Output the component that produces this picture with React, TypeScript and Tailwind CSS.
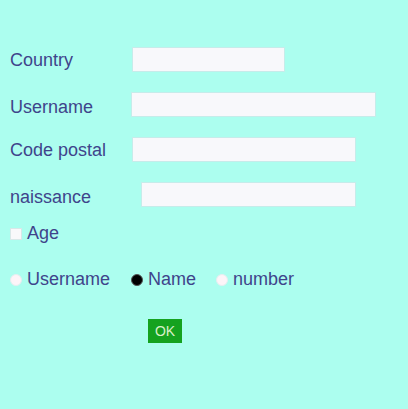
import React, { useState } from 'react';

const fields = [
  { id: 'country', label: 'Country', labelW: 'w-[122px] pt-[2px]', inputW: 'w-[153px]' },
  { id: 'username', label: 'Username', labelW: 'w-[121px] pt-[6px]', inputW: 'w-[245px]' },
  { id: 'postal', label: 'Code postal', labelW: 'w-[122px] pt-[2px]', inputW: 'w-[224px]' },
  { id: 'birth', label: 'naissance', labelW: 'w-[131px] pt-[6px]', inputW: 'w-[215px]' },
];

const choices = [
  { id: 'username', label: 'Username', w: 'w-[121px]' },
  { id: 'name', label: 'Name', w: 'w-[85px]' },
  { id: 'number', label: 'number', w: 'w-auto' },
];

export default function App() {
  const [age, setAge] = useState(false);
  const [choice, setChoice] = useState('name');

  return (
    <div className="w-[408px] h-[409px] bg-[#acfeef] text-[#3f448b] text-[18px] font-['Liberation_Sans',Arial,sans-serif] pl-[10px] pt-[47px]">
      <div className="flex flex-col gap-[20px]">
        {fields.map((f) => (
          <div key={f.id} className="flex items-center h-[25px]">
            <label className={`${f.labelW} leading-[21px]`}>{f.label}</label>
            <input
              className={`${f.inputW} h-[25px] bg-[#f8f8fb] border border-[#c6ecea] outline-none px-1 text-sm`}
            />
          </div>
        ))}
      </div>

      {/* Age checkbox */}
      <div className="flex items-center h-[21px] mt-[16px]" onClick={() => setAge(!age)}>
        <span className="w-[12px] h-[12px] bg-[#f9f8fa] border border-[#d8e8e8] flex items-center justify-center">
          {age && <span className="w-[6px] h-[6px] bg-black" />}
        </span>
        <span className="ml-[5px] leading-[21px]">Age</span>
      </div>

      {/* Radio choices */}
      <div className="flex items-center h-[21px] mt-[25px]">
        {choices.map((c) => (
          <div key={c.id} className={`flex items-center ${c.w}`} onClick={() => setChoice(c.id)}>
            {choice === c.id ? (
              <span className="w-[12px] h-[12px] rounded-full bg-black border border-[#555]" />
            ) : (
              <span className="w-[12px] h-[12px] rounded-full bg-[#fdf4f8] border border-[#e6eef0]" />
            )}
            <span className="ml-[5px] leading-[21px]">{c.label}</span>
          </div>
        ))}
      </div>

      <div className="mt-[27px] pl-[138px]">
        <button className="w-[34px] h-[24px] bg-[#15a21f] text-[#d8f0c8] text-[14px] leading-none">
          OK
        </button>
      </div>
    </div>
  );
}
